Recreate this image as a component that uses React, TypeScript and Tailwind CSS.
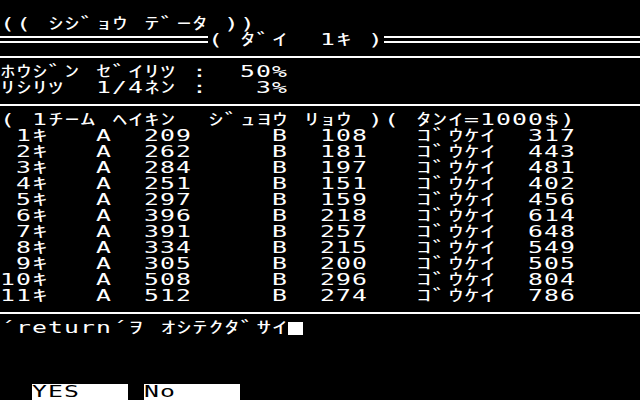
const data: [number, number][] = [
  [209, 108],
  [262, 181],
  [284, 197],
  [251, 151],
  [297, 159],
  [396, 218],
  [391, 257],
  [334, 215],
  [305, 200],
  [508, 296],
  [512, 274],
];

const pad = (v: number | string, n: number) => String(v).padStart(n, " ");

// half-width katakana come from Noto and need a bit more stretch than the ascii glyphs
const isKana = (ch: string) => ch >= "\uff61" && ch <= "\uff9f";

const Cell = ({ ch }: { ch: string }) => (
  <span className="inline-flex w-[16px] shrink-0 justify-center">
    {ch === " " ? (
      "\u00a0"
    ) : isKana(ch) ? (
      <span className="inline-block scale-x-[1.85] text-[16px]">{ch}</span>
    ) : (
      <span className="inline-block scale-x-[1.65]">{ch}</span>
    )}
  </span>
);

const Text = ({ text }: { text: string }) => (
  <>
    {[...text].map((c, i) => (
      <Cell key={i} ch={c} />
    ))}
  </>
);

const Row = ({ text = "", children }: { text?: string; children?: React.ReactNode }) => (
  <div className="flex h-[16px] leading-[16px]">
    <Text text={text} />
    {children}
  </div>
);

const Rule = () => (
  <div className="h-[16px] pt-[8px]">
    <div className="h-[2px] bg-white" />
  </div>
);

const DoubleBar = ({ className }: { className: string }) => (
  <div className={`${className} flex flex-col pt-[4px]`}>
    <div className="h-[2px] bg-white" />
    <div className="mt-[3px] h-[2px] bg-white" />
  </div>
);

export default function App() {
  return (
    <div className="h-[400px] w-[640px] overflow-hidden bg-black font-['DejaVu_Sans_Mono','Noto_Sans_CJK_JP',monospace] text-[15px] text-white">
      <Row />
      <Row text="(( ｼｼﾞｮｳ ﾃﾞｰﾀ ))" />
      <div className="flex h-[16px] leading-[16px]">
        <DoubleBar className="w-[208px]" />
        <Text text="( ﾀﾞｲ  1ｷ )" />
        <DoubleBar className="flex-1" />
      </div>
      <Rule />
      <Row text="ﾎｳｼﾞﾝ ｾﾞｲﾘﾂ :  50%" />
      <Row text="ﾘｼﾘﾂ  1/4ﾈﾝ :   3%" />
      <Rule />
      <Row text="( 1ﾁｰﾑ ﾍｲｷﾝ  ｼﾞｭﾖｳ ﾘｮｳ )( ﾀﾝｲ=1000$)" />
      {data.map(([a, b], i) => (
        <Row
          key={i}
          text={`${pad(i + 1, 2)}ｷ   A  ${pad(a, 3)}     B  ${pad(b, 3)}   ｺﾞｳｹｲ  ${pad(a + b, 3)}`}
        />
      ))}
      <Rule />
      <Row text="´return´ｦ ｵｼﾃｸﾀﾞｻｲ">
        <span className="mt-[2px] h-[13px] w-[15px] bg-white" />
      </Row>
      <Row />
      <Row />
      <Row />
      <div className="flex h-[16px] leading-[16px]">
        <div className="w-[32px]" />
        <div className="flex w-[96px] bg-white text-black">
          <Text text="YES" />
        </div>
        <div className="w-[16px]" />
        <div className="flex w-[96px] bg-white text-black">
          <Text text="No" />
        </div>
      </div>
    </div>
  );
}
